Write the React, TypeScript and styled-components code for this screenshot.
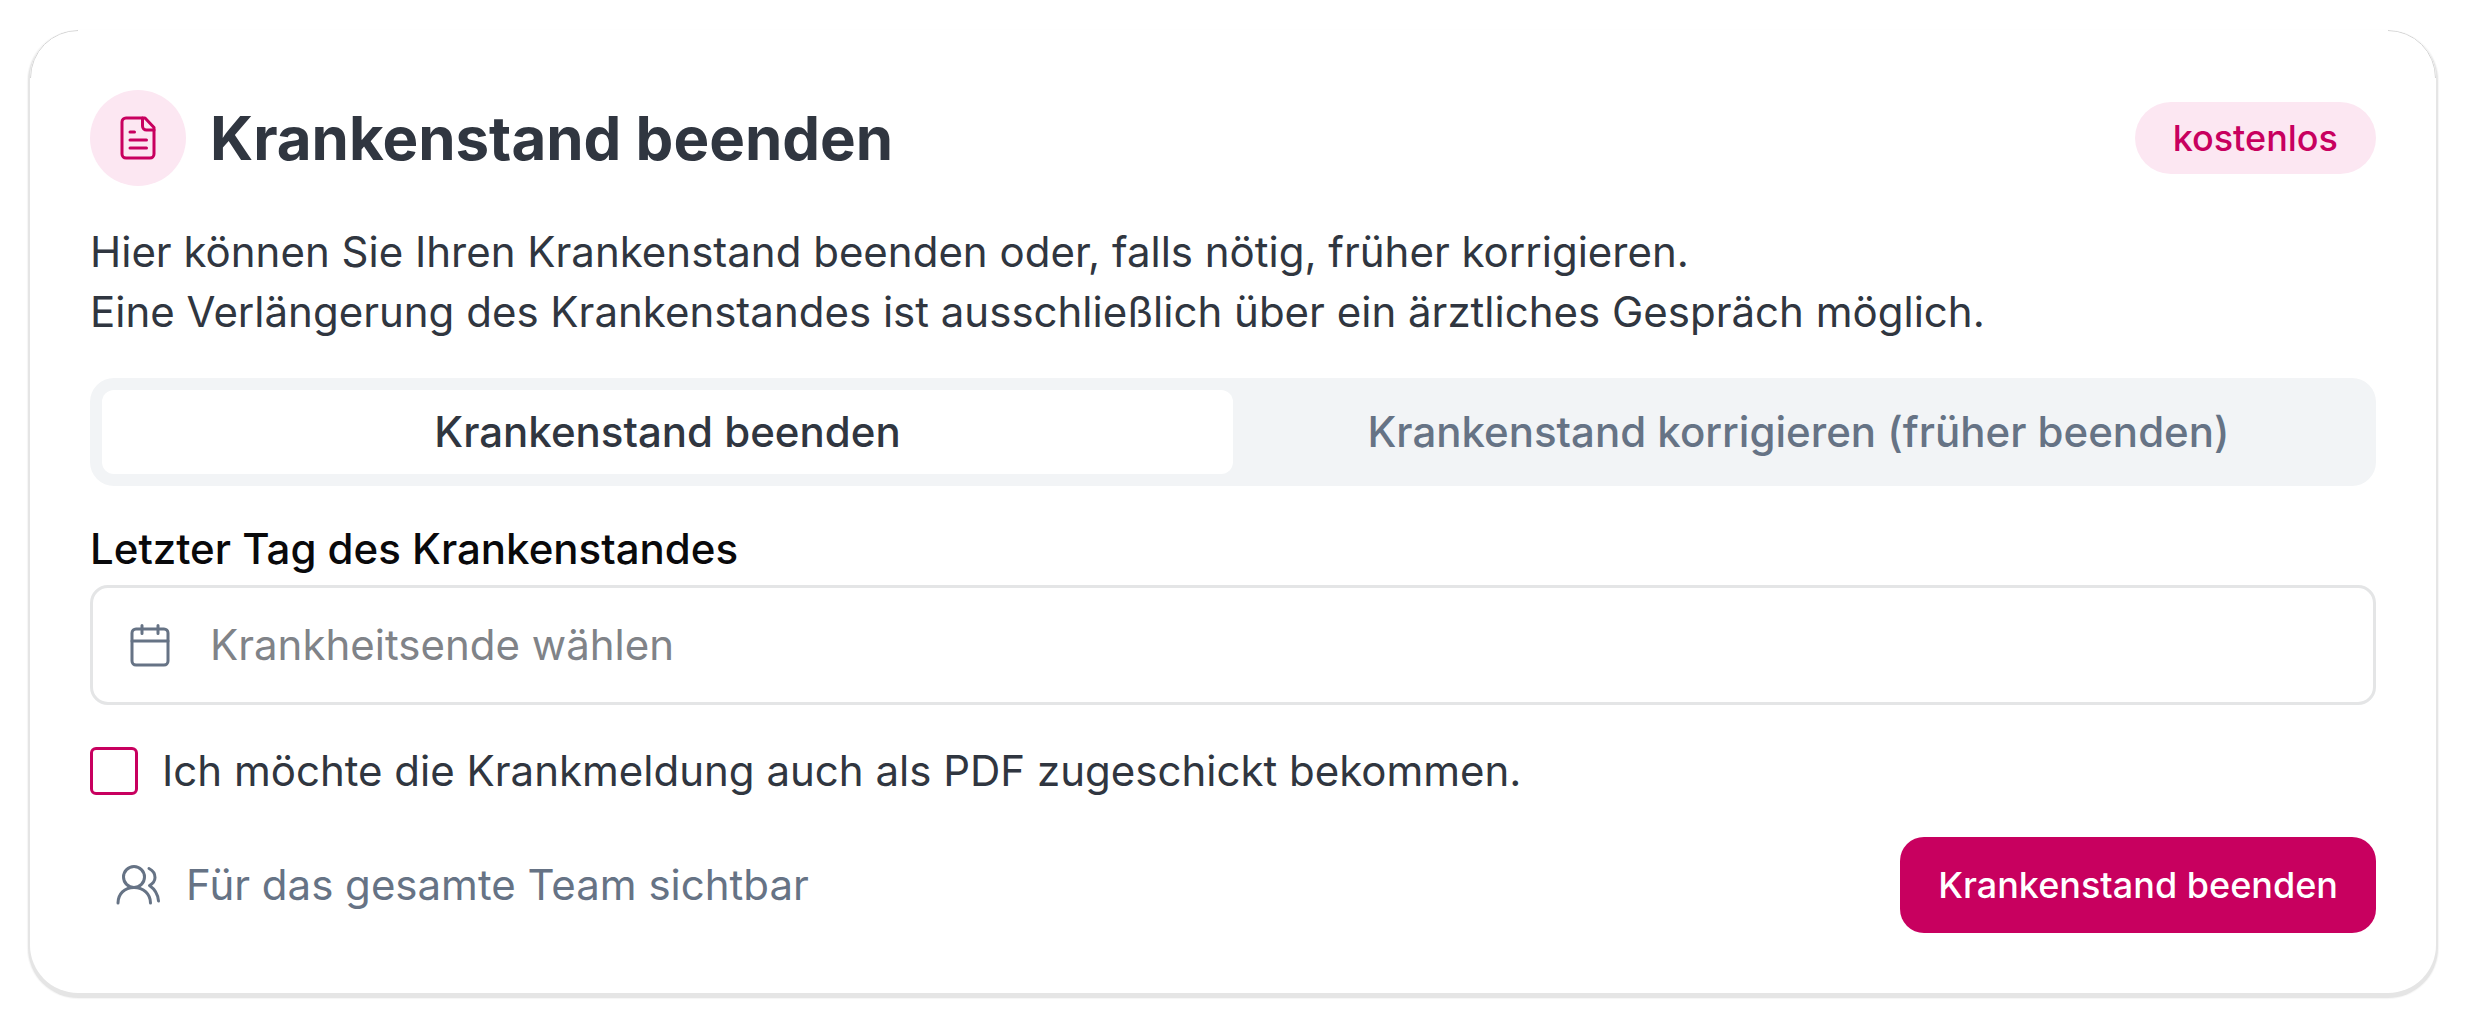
import React, { useState } from "react";
import styled, { createGlobalStyle } from "styled-components";

const color = {
  accent: "#c8005f",
  accentSoft: "#fce7f2",
  text: "#303640",
  muted: "#667385",
  placeholder: "#808388",
  line: "#e4e5e6",
  track: "#f2f4f6",
};

const GlobalStyle = createGlobalStyle`
  *, *::before, *::after { box-sizing: border-box; }
  body {
    margin: 0;
    background: #fff;
    color: ${color.text};
    font-family: Inter, "Liberation Sans", sans-serif;
    font-size: 42px;
    line-height: 60px;
  }
  button, input { font: inherit; color: inherit; }
`;

const Page = styled.main`
  padding: 30px;
`;

const Card = styled.form`
  position: relative;
  display: flex;
  flex-direction: column;
  gap: 36px;
  padding: 60px;
  border-radius: 48px;
  background: #fff;
  box-shadow: 0 3px 0 2px #e5e5e5, 0 3px 1px 3px #f6f6f6;

  /* hairline that only shows on the two upper corners */
  &::before {
    content: "";
    position: absolute;
    inset: 0;
    border: 1px solid #d4d4d4;
    border-radius: 48px;
    pointer-events: none;
    mask: linear-gradient(#000 0 0) 0 0 / 48px 48px no-repeat,
      linear-gradient(#000 0 0) 100% 0 / 48px 48px no-repeat;
  }
`;

const Header = styled.header`
  display: flex;
  align-items: center;
  gap: 24px;
`;

const IconCircle = styled.span`
  display: grid;
  place-items: center;
  flex: none;
  width: 96px;
  height: 96px;
  border-radius: 50%;
  background: ${color.accentSoft};
  color: ${color.accent};
`;

const Title = styled.h1`
  flex: 1;
  margin: 0;
  font-size: 60px;
  line-height: 72px;
  font-weight: 700;
`;

const Badge = styled.span`
  padding: 12px 38px;
  border-radius: 36px;
  background: ${color.accentSoft};
  color: ${color.accent};
  font-size: 36px;
  line-height: 48px;
  font-weight: 500;
`;

const Intro = styled.p`
  margin: 0;
`;

const Tabs = styled.div`
  display: grid;
  grid-template-columns: 1fr 1fr;
  padding: 12px;
  border-radius: 24px;
  background: ${color.track};
`;

const Tab = styled.button<{ $active: boolean }>`
  padding: 12px 24px;
  border: 0;
  border-radius: 12px;
  background: ${({ $active }) => ($active ? "#fff" : "transparent")};
  color: ${({ $active }) => ($active ? color.text : color.muted)};
  font-weight: 500;
  cursor: pointer;
`;

const Field = styled.div`
  display: flex;
  flex-direction: column;
  gap: 9px;
`;

const FieldLabel = styled.label`
  color: #09090b;
  line-height: 54px;
  font-weight: 500;
`;

const DateBox = styled.div`
  display: flex;
  align-items: center;
  gap: 36px;
  padding: 27px 33px;
  border: 3px solid ${color.line};
  border-radius: 18px;
  color: ${color.muted};
`;

const DateInput = styled.input`
  flex: 1;
  min-width: 0;
  height: 60px;
  padding: 0;
  border: 0;
  outline: 0;
  background: transparent;
  color: ${color.text};

  &::placeholder {
    color: ${color.placeholder};
    opacity: 1;
  }
`;

const CheckRow = styled.div`
  display: flex;
  align-items: center;
  gap: 24px;
`;

const Checkbox = styled.input`
  appearance: none;
  flex: none;
  width: 48px;
  height: 48px;
  margin: 0;
  border: 3px solid ${color.accent};
  border-radius: 6px;
  background: #fff;

  &:checked {
    background: ${color.accent};
    box-shadow: inset 0 0 0 6px #fff;
  }
`;

const Footer = styled.footer`
  display: flex;
  align-items: center;
  justify-content: space-between;
`;

const Visibility = styled.p`
  display: flex;
  align-items: center;
  gap: 24px;
  margin: 0;
  padding: 0 24px;
  color: ${color.muted};
`;

const SubmitButton = styled.button`
  padding: 24px 38px;
  border: 0;
  border-radius: 24px;
  background: ${color.accent};
  color: #fff;
  font-size: 36px;
  line-height: 48px;
  font-weight: 500;
  cursor: pointer;
`;

const Icon = styled.svg.attrs({ viewBox: "0 0 48 48", "aria-hidden": true })`
  display: block;
  flex: none;
  width: 48px;
  height: 48px;
  fill: none;
  stroke: currentColor;
  stroke-width: 3;
  stroke-linecap: round;
  stroke-linejoin: round;
`;

const DocumentIcon = () => (
  <Icon>
    <path d="M31 4H12a4 4 0 0 0-4 4v32a4 4 0 0 0 4 4h24a4 4 0 0 0 4-4V13.5Z" />
    <path d="M28.5 4v8a4 4 0 0 0 4 4H40" />
    <path d="M16 18h4.500M16 26h16.500M16 34h16.500" />
  </Icon>
);

const CalendarIcon = () => (
  <Icon>
    <rect x="6" y="8" width="36" height="36" rx="4" />
    <path d="M6 20h36M16 4.500v8M32 4.500v8" />
  </Icon>
);

const PeopleIcon = () => (
  <Icon>
    <circle cx="20" cy="16" r="10.500" />
    <path d="M4 42C4 33 10.500 26.500 20 26.500S36.500 33 36.500 42" />
    <path d="M35 7.500c4 2 6 5.500 6 9 0 3-2 6-5.500 8 5 3.500 8.500 9 9 15.500" />
  </Icon>
);

const tabs = ["Krankenstand beenden", "Krankenstand korrigieren (früher beenden)"];

export default function App() {
  const [active, setActive] = useState(0);

  return (
    <>
      <GlobalStyle />
      <Page>
        <Card onSubmit={(event) => event.preventDefault()}>
          <Header>
            <IconCircle>
              <DocumentIcon />
            </IconCircle>
            <Title>Krankenstand beenden</Title>
            <Badge>kostenlos</Badge>
          </Header>
          <Intro>
            Hier können Sie Ihren Krankenstand beenden oder, falls nötig, früher korrigieren.
            <br />
            Eine Verlängerung des Krankenstandes ist ausschließlich über ein ärztliches Gespräch möglich.
          </Intro>
          <Tabs role="tablist">
            {tabs.map((label, index) => (
              <Tab
                key={label}
                type="button"
                role="tab"
                aria-selected={active === index}
                $active={active === index}
                onClick={() => setActive(index)}
              >
                {label}
              </Tab>
            ))}
          </Tabs>
          <Field>
            <FieldLabel htmlFor="last-day">Letzter Tag des Krankenstandes</FieldLabel>
            <DateBox>
              <CalendarIcon />
              <DateInput id="last-day" type="text" placeholder="Krankheitsende wählen" />
            </DateBox>
          </Field>
          <CheckRow>
            <Checkbox id="send-pdf" type="checkbox" />
            <label htmlFor="send-pdf">
              Ich möchte die Krankmeldung auch als PDF zugeschickt bekommen.
            </label>
          </CheckRow>
          <Footer>
            <Visibility>
              <PeopleIcon />
              Für das gesamte Team sichtbar
            </Visibility>
            <SubmitButton type="submit">Krankenstand beenden</SubmitButton>
          </Footer>
        </Card>
      </Page>
    </>
  );
}
